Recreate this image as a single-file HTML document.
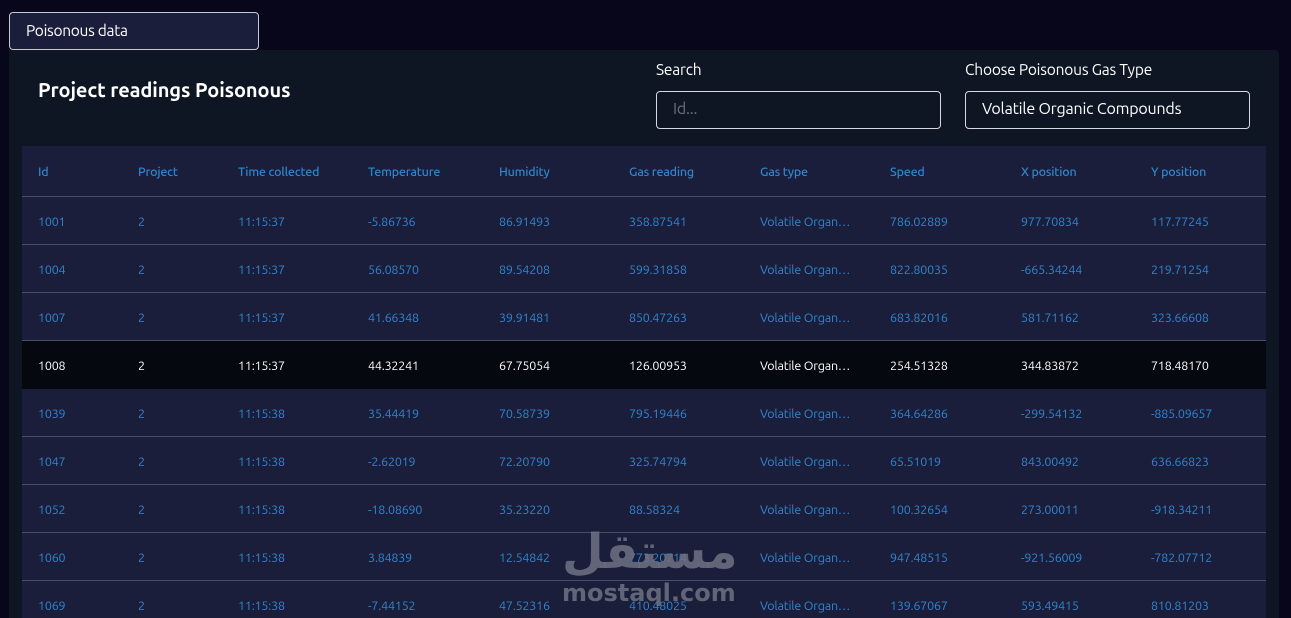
<!DOCTYPE html>
<html><head><style>
*{margin:0;padding:0;box-sizing:border-box}
html,body{width:1291px;height:618px;overflow:hidden}
body{background:#07061a;font-family:"Ubuntu","DejaVu Sans","Liberation Sans",sans-serif;position:relative}
.btn{position:absolute;left:9px;top:12px;width:250px;height:38px;background:#1b1e3a;border:1px solid #c8c8d0;border-radius:4px;color:#fff;font-size:15.5px;padding:9px 16px;letter-spacing:-0.3px}
.panel{position:absolute;left:9px;top:50px;width:1270px;height:568px;background:#0e1623;border-radius:0 4px 0 0}
h1{position:absolute;left:38px;top:78px;color:#fff;font-size:20px;font-weight:bold;letter-spacing:-0.1px}
.lbl{position:absolute;color:#fff;font-size:15.5px;top:61px;letter-spacing:-0.2px}
.inp{position:absolute;top:91px;height:38px;width:285px;border:1px solid #d8d8e0;border-radius:4px;color:#fff;font-size:16px;padding:8px 16px;letter-spacing:-0.2px}
.tbl{position:absolute;left:22px;top:146px;width:1244px;height:472px;background:#1b1e3a;overflow:hidden}
.row{position:absolute;left:0;width:1244px;height:48px;border-bottom:1px solid #4a4d63;color:#2f86d0;font-size:12.5px;letter-spacing:-0.2px}
.row span{position:absolute;top:18px;white-space:nowrap}
.hd{height:51px;font-weight:500}
.hd span{top:19px}
.hl{background:#06080f;color:#fff;border-bottom:none}
.wm{position:absolute;left:562px;top:524px;color:rgba(110,114,130,.85);font-weight:bold;text-align:center;width:165px;font-family:"DejaVu Sans",sans-serif}
</style></head><body>
<div class="btn">Poisonous data</div>
<div class="panel"></div>
<h1>Project readings Poisonous</h1>
<div class="lbl" style="left:656px">Search</div>
<div class="inp" style="left:656px;color:#6b6f80">Id...</div>
<div class="lbl" style="left:965px">Choose Poisonous Gas Type</div>
<div class="inp" style="left:965px">Volatile Organic Compounds</div>
<div class="tbl">
<div class="row hd" style="top:0"><span style="left:16px">Id</span><span style="left:116px">Project</span><span style="left:216px">Time collected</span><span style="left:346px">Temperature</span><span style="left:477px">Humidity</span><span style="left:607px">Gas reading</span><span style="left:738px">Gas type</span><span style="left:868px">Speed</span><span style="left:999px">X position</span><span style="left:1129px">Y position</span></div>
</div>
<div class="wm"><div style="font-size:48px;line-height:56px">مستقل</div><div style="font-size:24px;line-height:26px">mostaql.com</div></div>
<script>
var d=[["1001","11:15:37","-5.86736","86.91493","358.87541","786.02889","977.70834","117.77245"],
["1004","11:15:37","56.08570","89.54208","599.31858","822.80035","-665.34244","219.71254"],
["1007","11:15:37","41.66348","39.91481","850.47263","683.82016","581.71162","323.66608"],
["1008","11:15:37","44.32241","67.75054","126.00953","254.51328","344.83872","718.48170"],
["1039","11:15:38","35.44419","70.58739","795.19446","364.64286","-299.54132","-885.09657"],
["1047","11:15:38","-2.62019","72.20790","325.74794","65.51019","843.00492","636.66823"],
["1052","11:15:38","-18.08690","35.23220","88.58324","100.32654","273.00011","-918.34211"],
["1060","11:15:38","3.84839","12.54842","773.20714","947.48515","-921.56009","-782.07712"],
["1069","11:15:38","-7.44152","47.52316","410.48025","139.67067","593.49415","810.81203"]];
var t=document.querySelector('.tbl'),h='';
d.forEach(function(r,i){var x=[16,116,216,346,477,607,738,868,999,1129];var v=[r[0],"2",r[1],r[2],r[3],r[4],"Volatile Organ…",r[5],r[6],r[7]];
h+='<div class="row'+(i==3?' hl':'')+'" style="top:'+(51+i*48)+'px">'+v.map(function(s,j){return '<span style="left:'+x[j]+'px">'+s+'</span>'}).join('')+'</div>';});
t.insertAdjacentHTML('beforeend',h);
</script>
</body></html>
